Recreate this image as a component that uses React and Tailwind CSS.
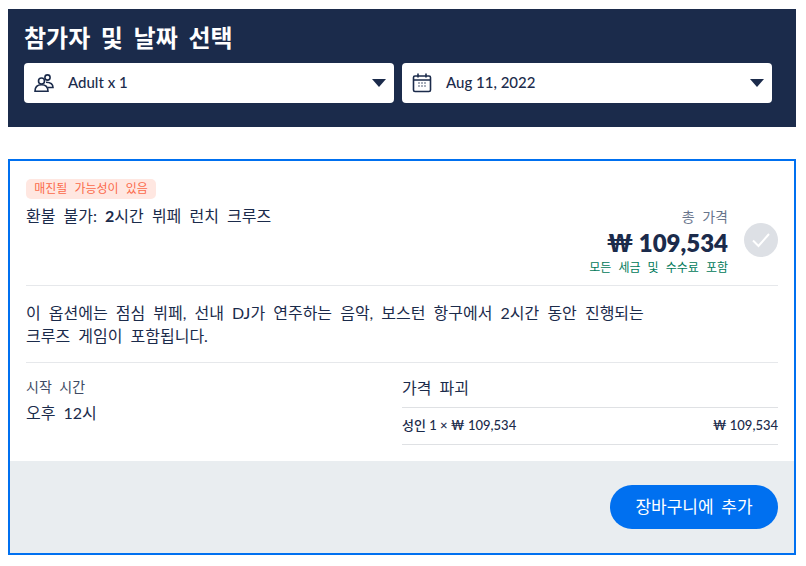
import React from "react";

const font = { fontFamily: '"Lato", "Noto Sans CJK KR", sans-serif' };

function Select({ icon, label }) {
  return (
    <div className="flex h-10 flex-1 items-center rounded-[4px] bg-white pl-[10px] pr-[8px]">
      <span className="flex w-[34px] shrink-0 items-center">{icon}</span>
      <span className="flex-1 pb-[2px] text-[15px] font-medium text-[#1b2b4b]">{label}</span>
      <svg width="14" height="8" viewBox="0 0 14 8" className="shrink-0">
        <path d="M0 0h14L7 8z" fill="#1b2b4b" />
      </svg>
    </div>
  );
}

const Users = (
  <svg width="20" height="20" viewBox="0 0 20 20" fill="none" stroke="#1b2b4b" strokeWidth="1.6">
    <circle cx="7.5" cy="8" r="3" />
    <circle cx="13.5" cy="4.5" r="2.6" />
    <path d="M1 18.2c0-4 2.6-6.4 6.5-6.4s6.5 2.4 6.5 6.4z" />
    <path d="M12 9.2c4 0 7 1.6 7 5.3h-5" />
  </svg>
);

const Calendar = (
  <svg width="20" height="20" viewBox="0 0 20 20" fill="none" stroke="#1b2b4b" strokeWidth="1.6">
    <rect x="1.5" y="3" width="17" height="15.5" rx="1.5" />
    <path d="M1.5 7h17M6 0.5v4M14 0.5v4" />
    <path d="M6.5 10h1M9.5 10h1M12.5 10h1M6.5 13h1M9.5 13h1M12.5 13h1" strokeWidth="1.4" />
  </svg>
);

export default function App() {
  return (
    <div style={font} className="min-h-[566px] bg-white pl-2 pr-[10px] pt-[9px] text-[#1b2b4b] [word-spacing:0.25em]">
      <section className="h-[118px] bg-[#1b2b4b] px-4 pt-[12px]">
        <h2 className="mb-[8px] h-[34px] text-[24px] font-bold leading-[34px] text-white [word-spacing:0.2em]">참가자 및 날짜 선택</h2>
        <div className="flex gap-2 pr-2 [word-spacing:0]">
          <Select icon={Users} label="Adult x 1" />
          <Select icon={Calendar} label="Aug 11, 2022" />
        </div>
      </section>

      <section className="mt-8 h-[396px] border-2 border-[#0070f0]">
        <div className="h-[300px] px-4 pt-[18px]">
          <div className="flex h-[107px] justify-between border-b border-[#e6e8eb]">
            <div>
              <span className="block h-5 w-[130px] rounded-[5px] bg-[#ffe7e1] text-center text-[12px] leading-5 text-[#fb6a4a]">매진될 가능성이 있음</span>
              <p className="mt-[7px] text-[16px] leading-[20px]">환불 불가: <b>2</b>시간 뷔페 런치 크루즈</p>
            </div>
            <div className="flex gap-4 pt-[29px]">
              <div className="text-right">
                <p className="text-[14px] leading-[18px] text-[#68758c]">총 가격</p>
                <p className="mt-[2px] text-[24px] font-extrabold leading-[30px] [word-spacing:0]">₩ 109,534</p>
                <p className="mt-[1px] text-[12px] leading-[17px] text-[#007a5a]">모든 세금 및 수수료 포함</p>
              </div>
              <div className="mt-[15px] flex h-[34px] w-[34px] items-center justify-center rounded-full bg-[#dde0e5]">
                <svg width="20" height="16" viewBox="0 0 20 16" fill="none" stroke="#fff" strokeWidth="2">
                  <path d="M2 8.5l5.5 5.5L18 2" />
                </svg>
              </div>
            </div>
          </div>

          <p className="flex h-[76px] w-[640px] items-center text-[16px] leading-[23px]">
            이 옵션에는 점심 뷔페, 선내 DJ가 연주하는 음악, 보스턴 항구에서 2시간 동안 진행되는 크루즈 게임이 포함됩니다.
          </p>

          <div className="grid grid-cols-2 border-t border-[#e6e8eb]">
            <div className="pt-[14px]">
              <p className="text-[14px] leading-5 text-[#3d4a63]">시작 시간</p>
              <p className="mt-[6px] text-[16px] leading-5">오후 12시</p>
            </div>
            <div className="pt-[15px]">
              <p className="h-[30px] border-b border-[#dfe1e4] text-[16px] leading-5">가격 파괴</p>
              <div className="flex h-[37px] items-center justify-between border-b border-[#dfe1e4] text-[13px] font-medium [word-spacing:0]">
                <span>성인 1 × ₩ 109,534</span>
                <span>₩ 109,534</span>
              </div>
            </div>
          </div>
        </div>

        <div className="flex h-[92px] items-start justify-end bg-[#e9edf0] px-4 pt-6">
          <button className="h-11 w-[168px] rounded-full bg-[#0070f0] text-[17px] text-white [word-spacing:0.2em]">장바구니에 추가</button>
        </div>
      </section>
    </div>
  );
}
